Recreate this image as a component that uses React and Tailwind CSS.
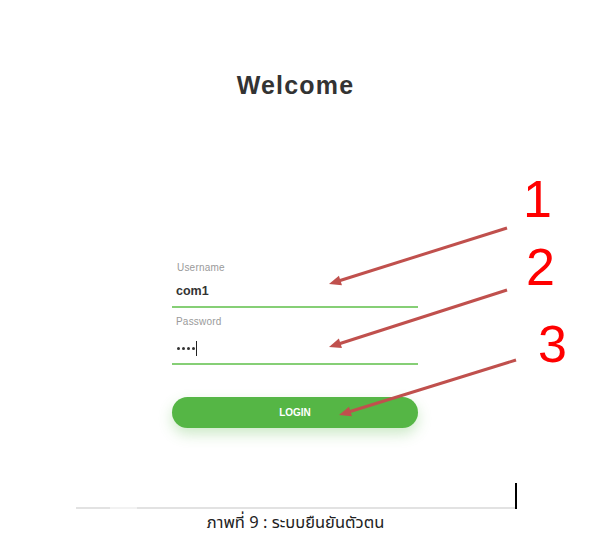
import React from "react";

function Arrow({ x1, y1, x2, y2 }) {
  const dx = x2 - x1;
  const dy = y2 - y1;
  const len = Math.sqrt(dx * dx + dy * dy);
  const ux = dx / len;
  const uy = dy / len;
  const hl = 12;
  const hw = 5;
  const bx = x2 - ux * hl;
  const by = y2 - uy * hl;
  const p1 = `${x2},${y2}`;
  const p2 = `${bx - uy * hw},${by + ux * hw}`;
  const p3 = `${bx + uy * hw},${by - ux * hw}`;
  return (
    <g>
      <line x1={x1} y1={y1} x2={bx + ux * 2} y2={by + uy * 2} stroke="#c0504d" strokeWidth="3" />
      <polygon points={`${p1} ${p2} ${p3}`} fill="#c0504d" />
    </g>
  );
}

export default function App() {
  return (
    <div className="relative w-[615px] h-[554px] bg-white overflow-hidden" style={{ fontFamily: "'Liberation Sans', Arial, sans-serif" }}>
      <div className="pt-[70px] w-[591px] text-center">
        <h1 className="text-[25px] leading-[30px] font-bold tracking-[1.2px] text-[#333333]">Welcome</h1>
      </div>

      <div className="pl-[172px] pt-[162px]">
        <div className="w-[246px] flex flex-col">
          <label className="pl-[5px] text-[10px] leading-[12px] tracking-[0.2px] text-[#9a9a9a]">Username</label>
          <div className="pl-[4px] pt-[9px] h-[32px] text-[12.5px] leading-[16px] font-bold text-[#333333]">com1</div>
          <div className="h-[2px] bg-[#86cf76]"></div>
          <label className="pl-[4px] pt-[8px] text-[10px] leading-[12px] tracking-[0.2px] text-[#9a9a9a]">Password</label>
          <div className="pl-[5px] pt-[13px] h-[35px] flex items-start">
            <div className="flex items-center h-[14px] gap-[2px]">
              <span className="w-[3px] h-[3px] rounded-full bg-[#333333]"></span>
              <span className="w-[3px] h-[3px] rounded-full bg-[#333333]"></span>
              <span className="w-[3px] h-[3px] rounded-full bg-[#333333]"></span>
              <span className="w-[3px] h-[3px] rounded-full bg-[#333333]"></span>
            </div>
            <span className="ml-[1px] w-[1px] h-[15px] bg-[#222222]"></span>
          </div>
          <div className="h-[2px] bg-[#86cf76]"></div>
          <button className="mt-[32px] h-[31px] w-full rounded-full bg-[#55b645] text-white text-[10px] font-bold shadow-[0_6px_14px_rgba(85,182,69,0.3)]">LOGIN</button>
        </div>
      </div>

      <div className="pt-[55px] pl-[76px] flex items-end">
        <div className="w-[439px] h-[2px] bg-[#e2e2e2] flex">
          <div className="ml-[34px] w-[27px] h-[2px] bg-[#f2f2f2]"></div>
        </div>
        <div className="w-[2px] h-[26px] bg-black"></div>
      </div>
      <div className="w-[591px] text-center pt-[4px] text-[16.5px] leading-[19px] text-[#222222]" style={{ fontFamily: "Tahoma, 'Noto Sans Thai', 'Noto Sans', 'DejaVu Sans', sans-serif" }}>
        ภาพที่ 9 : ระบบยืนยันตัวตน
      </div>

      <svg className="absolute inset-0" width="615" height="554">
        <Arrow x1={507} y1={228} x2={329} y2={284} />
        <Arrow x1={507} y1={290} x2={329} y2={347} />
        <Arrow x1={516} y1={360} x2={339} y2={415} />
      </svg>
      <span className="absolute left-[523px] top-[169px] text-[52px] leading-[60px] text-[#ff0000]">1</span>
      <span className="absolute left-[526px] top-[237px] text-[52px] leading-[60px] text-[#ff0000]">2</span>
      <span className="absolute left-[538px] top-[314px] text-[52px] leading-[60px] text-[#ff0000]">3</span>
    </div>
  );
}
